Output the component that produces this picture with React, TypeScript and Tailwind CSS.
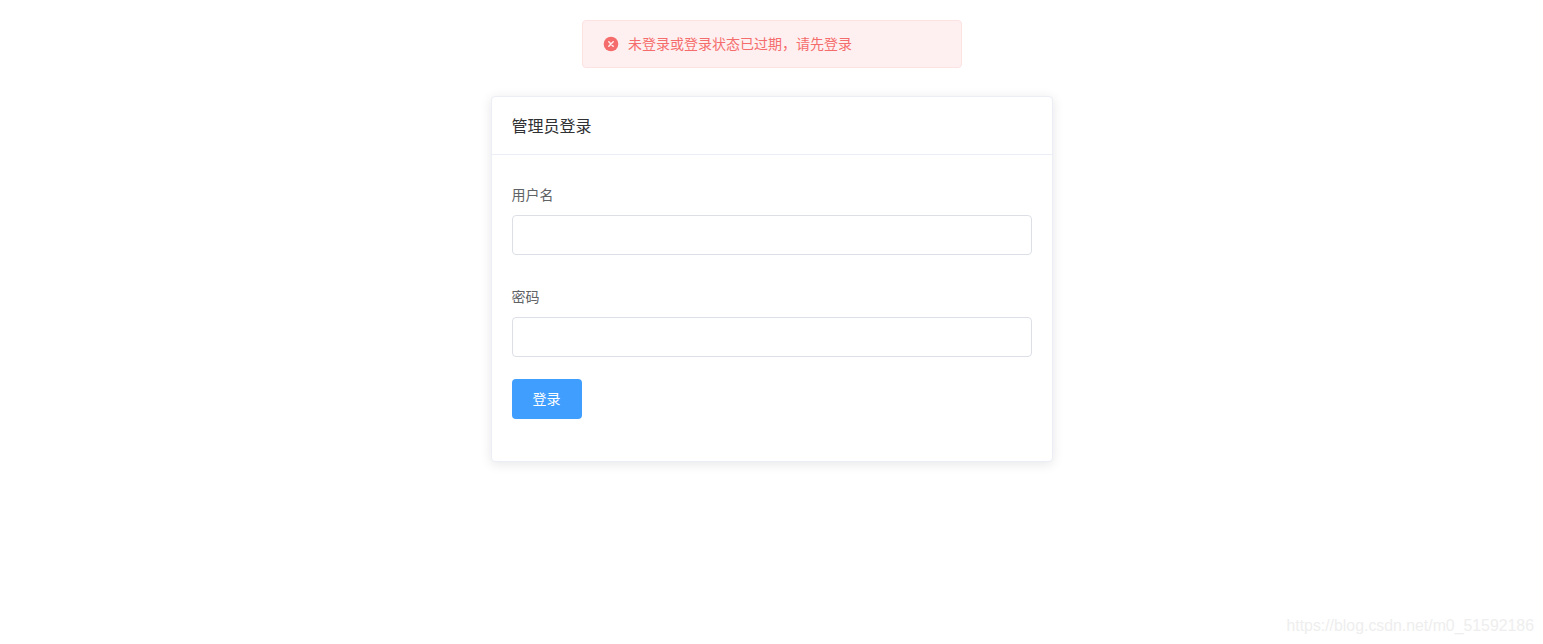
export default function App() {
  const font = "font-['Noto_Sans_CJK_SC','Microsoft_YaHei',sans-serif]";
  return (
    <div className={`relative h-[644px] overflow-hidden bg-white pt-[96px] ${font}`}>
      <div className="absolute left-[582px] top-[20px] flex h-[48px] w-[380px] items-center rounded-[4px] border border-[#fde2e2] bg-[#fef0f0] pl-[20px]">
        <svg width="16" height="16" viewBox="0 0 16 16" className="mr-[9px] shrink-0">
          <circle cx="8" cy="8" r="7.3" fill="#f56c6c" />
          <path d="M5.8 5.8 10.2 10.2M10.2 5.8 5.8 10.2" stroke="#fef0f0" strokeWidth="1.5" strokeLinecap="round" />
        </svg>
        <span className="pb-[2px] text-[14px] leading-none text-[#f56c6c]">未登录或登录状态已过期，请先登录</span>
      </div>

      <div className="mx-auto box-border w-[562px] overflow-hidden rounded-[4px] border border-[#ebeef5] bg-white shadow-[0_2px_12px_0_rgba(0,0,0,0.1)]">
        <div className="border-b border-[#ebeef5] px-[20px] py-[18px] text-[16px] leading-[21px] text-[#303133]">管理员登录</div>
        <form className="p-[20px]">
          <div className="mb-[22px]">
            <label className="block pb-[2px] text-[14px] leading-[38px] text-[#606266]">用户名</label>
            <input className="block h-[40px] w-full rounded-[4px] border border-[#dcdfe6] bg-white px-[15px] outline-none" />
          </div>
          <div className="mb-[22px]">
            <label className="block pb-[2px] text-[14px] leading-[38px] text-[#606266]">密码</label>
            <input type="password" className="block h-[40px] w-full rounded-[4px] border border-[#dcdfe6] bg-white px-[15px] outline-none" />
          </div>
          <div className="mb-[22px]">
            <button type="button" className="block h-[40px] w-[70px] rounded-[4px] bg-[#409eff] pb-[2px] text-[14px] leading-none text-white">登录</button>
          </div>
        </form>
      </div>

      <div className="absolute bottom-[8px] right-[9px] font-['Liberation_Sans',sans-serif] text-[15.85px] leading-[20px] text-[#eeeeee]">https://blog.csdn.net/m0_51592186</div>
    </div>
  );
}
